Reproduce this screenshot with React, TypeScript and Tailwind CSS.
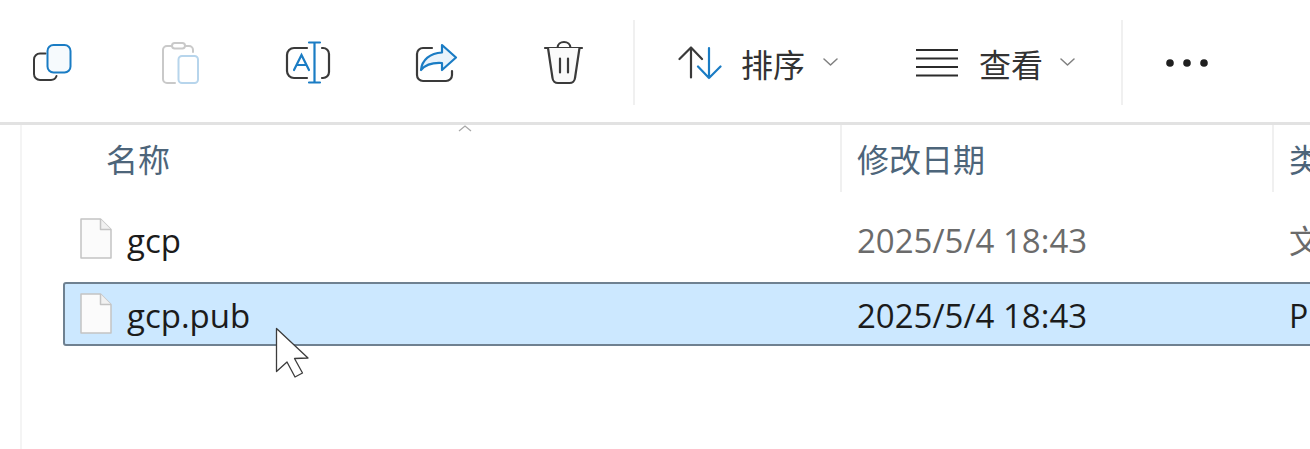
const BLUE = "#1a7cc4";
const INK = "#3a3a3a";

const CopyIcon = () => (
  <svg width="48" height="48" viewBox="28 38 48 48" fill="none" strokeWidth="2" strokeLinecap="round">
    <path d="M45.500 53.500H40a6 6 0 0 0-6 6V74a6 6 0 0 0 6 6h11a6 6 0 0 0 5.500-4" stroke={INK} />
    <rect x="47.500" y="45" width="23" height="27.500" rx="6" stroke={BLUE} fill="#f6fafd" />
  </svg>
);

const PasteIcon = () => (
  <svg width="48" height="48" viewBox="156 38 48 48" fill="none" strokeWidth="2" strokeLinecap="round">
    <path d="M172 46h-5a4 4 0 0 0-4 4v29a4 4 0 0 0 4 4h8M185 46h4a4 4 0 0 1 4 4v2" stroke="#c9c9c9" />
    <rect x="172" y="43" width="13" height="5.500" rx="2.700" stroke="#c9c9c9" />
    <rect x="178.500" y="56" width="19.500" height="27" rx="3.500" stroke="#b7d5ec" />
  </svg>
);

const RenameIcon = () => (
  <svg width="48" height="48" viewBox="284 38 48 48" fill="none" strokeWidth="2.200" strokeLinecap="round">
    <path d="M307 48h-13a7 7 0 0 0-7 7v16a7 7 0 0 0 7 7h13M322 48h1a6 6 0 0 1 6 6v18a6 6 0 0 1-6 6h-1" stroke={INK} />
    <path d="M314.500 43v39M309 42.500h11M309 82.500h11M294 70l7.500-15 7.500 15M296.500 65h10" stroke={BLUE} />
  </svg>
);

const ShareIcon = () => (
  <svg width="48" height="48" viewBox="412 38 48 48" fill="none" strokeWidth="2.200" strokeLinecap="round" strokeLinejoin="round">
    <path d="M432 48h-9a6 6 0 0 0-6 6v21a6 6 0 0 0 6 6h23a6 6 0 0 0 6-6v-4" stroke={INK} />
    <path d="M442 45l14 12.500L442 70v-7c-8-.5-16 1-21 7 1-10 9-17 21-17.500z" stroke={BLUE} fill="#e9f3fb" />
  </svg>
);

const TrashIcon = () => (
  <svg width="48" height="48" viewBox="540 38 48 48" fill="none" stroke={INK} strokeWidth="2.200" strokeLinecap="round" strokeLinejoin="round">
    <path d="M545 48h37M557.500 48c0-8 13-8 13 0" />
    <path d="M548 48l4.500 30a5.500 5.500 0 0 0 5.500 5h11.500a5.500 5.500 0 0 0 5.500-5l4.500-30" fill="#fafafa" />
    <path d="M560 58.500v14M568 58.500v14" />
  </svg>
);

const SortIcon = () => (
  <svg width="44" height="48" viewBox="678 38 44 48" fill="none" strokeWidth="2.200" strokeLinecap="round" strokeLinejoin="round">
    <path d="M691 77.500V47.500M679.500 59L691 47.500 702 59" stroke={INK} />
    <path d="M709 48v30M698 66.500L709 78l11.500-11.500" stroke={BLUE} />
  </svg>
);

const LinesIcon = () => (
  <svg width="42" height="48" viewBox="916 38 42 48" fill="none" stroke="#2b2b2b" strokeWidth="2">
    <path d="M916 50h42M916 58.500h42M916 67h42M916 75.500h42" />
  </svg>
);

const Chevron = () => (
  <svg width="15" height="8" viewBox="0 0 15 8" fill="none" stroke="#808080" strokeWidth="1.500" strokeLinecap="round" strokeLinejoin="round">
    <path d="M1 1l6.500 6L14 1" />
  </svg>
);

const FileIcon = () => (
  <svg width="32" height="41" viewBox="0 0 32 41" fill="#fbfbfb" stroke="#c4c4c4" strokeWidth="1.500" strokeLinejoin="round" className="mb-[2px]">
    <path d="M1 1h19.500L31 11.500V40H1z" />
    <path d="M20.500 1v10.500H31" fill="#f1f1f1" />
  </svg>
);

const Cursor = () => (
  <svg width="36" height="52" viewBox="274 326 36 52" fill="#ffffff" stroke="#3c3c3c" strokeWidth="1.300" strokeLinejoin="round" className="absolute left-[274px] top-[326px]">
    <path d="M276.500 328.500V371.500L287 362l8 15 7.500-4-8-14.500 13.500-.5z" />
  </svg>
);

const Separator = () => <div className="w-[2px] h-[85px] bg-[#f0f0f0] shrink-0" />;

const toolbarIcons = [CopyIcon, PasteIcon, RenameIcon, ShareIcon, TrashIcon];

const files = [
  { name: "gcp", date: "2025/5/4 18:43", type: "文", selected: false },
  { name: "gcp.pub", date: "2025/5/4 18:43", type: "P", selected: true },
];

export default function App() {
  return (
    <div className="relative w-[1310px] h-[449px] overflow-hidden bg-white font-['Open_Sans','Noto_Sans_CJK_SC',sans-serif]">
      <div className="flex items-center h-[125px] pt-[2px] border-b-[3px] border-[#e2e2e2] text-[32px] text-[#333333] whitespace-nowrap">
        <div className="flex gap-6">
          {toolbarIcons.map((Icon, i) => (
            <button key={i} className="w-[104px] flex justify-center">
              <Icon />
            </button>
          ))}
        </div>
        <div className="ml-[17px]">
          <Separator />
        </div>
        <div className="flex items-center ml-[43px]">
          <SortIcon />
          <span className="ml-[19px] w-[65px] pt-[6px]">排序</span>
          <div className="ml-[17px]">
            <Chevron />
          </div>
        </div>
        <div className="flex items-center ml-[78px]">
          <LinesIcon />
          <span className="ml-[21px] w-[65px] pt-[6px]">查看</span>
          <div className="ml-4">
            <Chevron />
          </div>
        </div>
        <div className="ml-[46px]">
          <Separator />
        </div>
        <svg width="44" height="10" viewBox="0 0 44 10" fill="#1f1f1f" className="ml-[43px] mt-[2px]">
          <circle cx="4" cy="5" r="3.800" />
          <circle cx="21" cy="5" r="3.800" />
          <circle cx="38" cy="5" r="3.800" />
        </svg>
      </div>

      <div className="ml-5 h-[324px] border-l-2 border-[#f4f4f4]">
        <div className="relative flex h-[67px] text-[32px] text-[#4d657a] w-[1400px]">
          <svg width="14" height="7" viewBox="0 0 14 7" fill="none" stroke="#a8a8a8" strokeWidth="1.300" className="absolute left-[436px] top-0">
            <path d="M1 6l6-5 6 5" />
          </svg>
          <div className="w-[818px] shrink-0 pl-[84px] pt-[12px] leading-[46px]">名称</div>
          <div className="w-[432px] shrink-0 pl-[15px] pt-[12px] leading-[46px] border-l-2 border-[#f0f0f0]">修改日期</div>
          <div className="shrink-0 pl-[15px] pt-[12px] leading-[46px] border-l-2 border-[#f0f0f0]">类</div>
        </div>
        <div className="flex flex-col gap-[11px] pl-[41px] pt-[15px] w-[1400px]">
          {files.map((file) => (
            <div
              key={file.name}
              className={
                file.selected
                  ? "flex items-center h-[64px] border-2 border-[#6f8191] rounded-[3px] bg-[#cce8ff] text-[#1b1b1b]"
                  : "flex items-center h-[64px] border-2 border-transparent text-[#1b1b1b]"
              }
            >
              <div className="flex items-center w-[775px] pl-[15px] gap-[15px] text-[33px] shrink-0">
                <FileIcon />
                <span className="pt-[3px]">{file.name}</span>
              </div>
              <div className={file.selected ? "w-[432px] pl-[17px] pt-[3px] text-[33px] shrink-0" : "w-[432px] pl-[17px] pt-[3px] text-[33px] shrink-0 text-[#6b6b6b]"}>
                {file.date}
              </div>
              <div className={file.selected ? "pl-[17px] pt-[3px] text-[32px] text-[#1b1b1b]" : "pl-[17px] pt-[3px] text-[32px] text-[#6b6b6b]"}>
                {file.type}
              </div>
            </div>
          ))}
        </div>
      </div>
      <Cursor />
    </div>
  );
}
